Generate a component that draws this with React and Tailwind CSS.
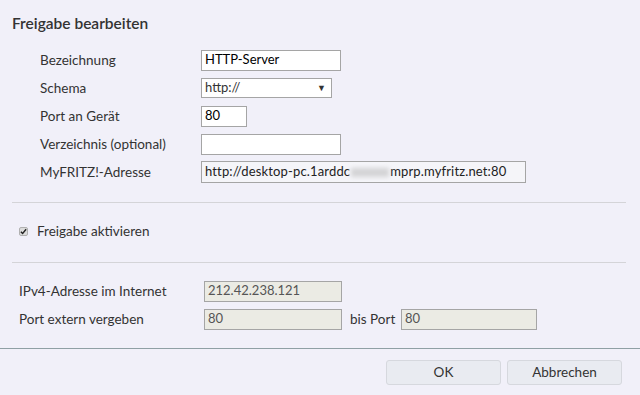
import React from "react";

const font = { fontFamily: '"Source Sans Pro", Lato, "Open Sans", sans-serif' };

function Row({ label, children }) {
  return (
    <div className="flex items-center h-[28px]">
      <div className="w-[161px] text-[13.5px] text-[#333]">{label}</div>
      {children}
    </div>
  );
}

function Field({ w, value, ro, h = "h-[21px]", bg }) {
  return (
    <div
      className={`${w} ${h} border border-[#a5a5a5] flex items-center px-[3px] text-[13px] ${
        bg ? bg : ro ? "bg-[#ebebe4] text-[#555]" : "bg-white text-black"
      }`}
    >
      {value}
    </div>
  );
}

export default function App() {
  return (
    <div className="w-[640px] h-[395px] bg-[#f1f0f9] flex flex-col" style={font}>
      <div className="px-[12px] pt-[12px]">
        <h2 className="text-[15.5px] font-semibold text-[#333] leading-[22px]">Freigabe bearbeiten</h2>

        <div className="pl-[28px] mt-[12px] flex flex-col">
          <Row label="Bezeichnung">
            <Field w="w-[140px]" value="HTTP-Server" />
          </Row>
          <Row label="Schema">
            <div className="w-[131px] h-[20px] border border-[#a5a5a5] bg-white flex items-center justify-between px-[3px] text-[13px] text-[#333]">
              <span>http://</span>
              <span className="text-[9px] text-[#333] mr-[2px]">▼</span>
            </div>
          </Row>
          <Row label="Port an Gerät">
            <Field w="w-[46px]" value="80" />
          </Row>
          <Row label="Verzeichnis (optional)">
            <Field w="w-[140px]" value="" />
          </Row>
          <Row label="MyFRITZ!-Adresse">
            <Field
              w="w-[325px]"
              h="h-[22px]"
              bg="bg-[#f5f5f9]"
              value={
                <span className="text-[#222] tracking-[0.15px]">
                  http://desktop-pc.1arddc
                  <span className="inline-block w-[38px] h-[9px] align-middle bg-[#d4d4d6] blur-[2px] mx-[1px]" />
                  mprp.myfritz.net:80
                </span>
              }
            />
          </Row>
        </div>

        <div className="mt-[16px] border-t border-[#d4d4d8] mr-[2px]" />

        <div className="flex items-center pl-[7px] h-[59px] pb-[2px]">
          <div className="w-[9px] h-[9px] rounded-[2px] bg-[#dcdcdc] border border-[#b0b0b0] flex items-center justify-center">
            <svg width="7" height="7" viewBox="0 0 8 8">
              <path d="M1 4.2 L3 6.2 L7 1.5" fill="none" stroke="#222" strokeWidth="1.6" />
            </svg>
          </div>
          <span className="ml-[9px] text-[13.5px] text-[#333]">Freigabe aktivieren</span>
        </div>

        <div className="border-t border-[#d4d4d8] mr-[2px]" />

        <div className="pl-[7px] mt-[14px] flex flex-col">
          <div className="flex items-center h-[28px]">
            <div className="w-[185px] text-[13.5px] text-[#333]">IPv4-Adresse im Internet</div>
            <Field w="w-[138px]" ro value="212.42.238.121" />
          </div>
          <div className="flex items-center h-[28px]">
            <div className="w-[185px] text-[13.5px] text-[#333]">Port extern vergeben</div>
            <Field w="w-[138px]" ro value="80" />
            <span className="ml-[8px] w-[51px] text-[13.5px] text-[#333]">bis Port</span>
            <Field w="w-[136px]" ro value="80" />
          </div>
        </div>
      </div>

      <div className="mt-[15px] border-t border-[#8fa0a4]" />

      <div className="flex justify-end gap-[6px] pr-[18px] pt-[11px]">
        <button className="w-[115px] h-[25px] bg-[#e9ebf1] border border-[#d6d8de] rounded-[3px] text-[13.5px] text-[#333]">
          OK
        </button>
        <button className="w-[115px] h-[25px] bg-[#e9ebf1] border border-[#d6d8de] rounded-[3px] text-[13.5px] text-[#333]">
          Abbrechen
        </button>
      </div>
    </div>
  );
}
